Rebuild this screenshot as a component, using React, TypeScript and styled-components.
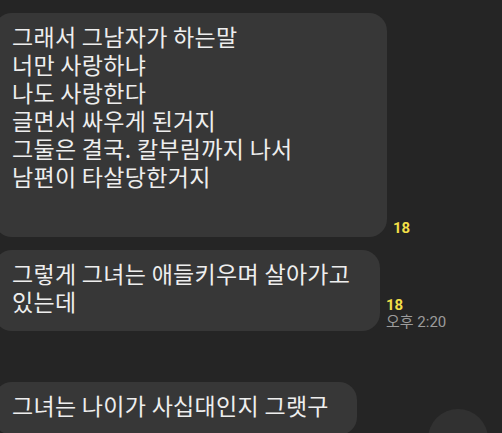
import React from "react";
import styled, { createGlobalStyle } from "styled-components";

const GlobalStyle = createGlobalStyle`
  html, body {
    margin: 0;
    padding: 0;
    background: #252525;
    overflow: hidden;
  }
  body {
    font-family: "Noto Sans CJK KR", "Noto Sans", sans-serif;
  }
`;

const ChatWrapper = styled.div`
  position: relative;
  width: 502px;
  height: 433px;
  overflow: hidden;
  padding-top: 13px;
  box-sizing: border-box;
  background: #252525;
`;

const MessageRow = styled.div<{ $gap: number }>`
  display: flex;
  flex-direction: row;
  align-items: flex-end;
  gap: 6px;
  margin-bottom: ${(props) => props.$gap}px;
`;

const Bubble = styled.div<{ $width: number; $padBottom: number }>`
  box-sizing: border-box;
  width: ${(props) => props.$width}px;
  margin-left: -6px;
  padding: 9px 10px ${(props) => props.$padBottom}px 18px;
  background: #373737;
  border-radius: 18px;
  color: #eeeeee;
  font-family: "Noto Sans CJK KR", sans-serif;
  font-size: 23px;
  letter-spacing: 0.3px;
  line-height: 28px;
  white-space: pre-line;
`;

const Meta = styled.div`
  display: flex;
  flex-direction: column;
  align-items: flex-start;
  font-family: Roboto, "Noto Sans CJK KR", sans-serif;
  font-size: 15px;
  line-height: 17px;
`;

const UnreadCount = styled.span`
  color: #f2df48;
  font-weight: bold;
`;

const Time = styled.span`
  color: #9c9c9c;
`;

const ScrollButton = styled.div`
  position: absolute;
  left: 428px;
  top: 409px;
  width: 60px;
  height: 60px;
  border-radius: 50%;
  background: #313131;
`;

type Message = {
  text: string;
  width: number;
  padBottom: number;
  gap: number;
  unread?: string;
  time?: string;
};

const messages: Message[] = [
  {
    text: "그래서 그남자가 하는말\n너만 사랑하냐\n나도 사랑한다\n글면서 싸우게 된거지\n그둘은 결국. 칼부림까지 나서\n남편이 타살당한거지",
    width: 393,
    padBottom: 47,
    gap: 13,
    unread: "18",
  },
  {
    text: "그렇게 그녀는 애들키우며 살아가고\n있는데",
    width: 386,
    padBottom: 16,
    gap: 51,
    unread: "18",
    time: "오후 2:20",
  },
  {
    text: "그녀는 나이가 사십대인지 그랫구",
    width: 363,
    padBottom: 16,
    gap: 0,
  },
];

const App = () => {
  return (
    <>
      <GlobalStyle />
      <ChatWrapper>
        {messages.map((m, i) => (
          <MessageRow key={i} $gap={m.gap}>
            <Bubble $width={m.width} $padBottom={m.padBottom}>
              {m.text}
            </Bubble>
            {(m.unread || m.time) && (
              <Meta>
                {m.unread && <UnreadCount>{m.unread}</UnreadCount>}
                {m.time && <Time>{m.time}</Time>}
              </Meta>
            )}
          </MessageRow>
        ))}
        <ScrollButton />
      </ChatWrapper>
    </>
  );
};

export default App;
